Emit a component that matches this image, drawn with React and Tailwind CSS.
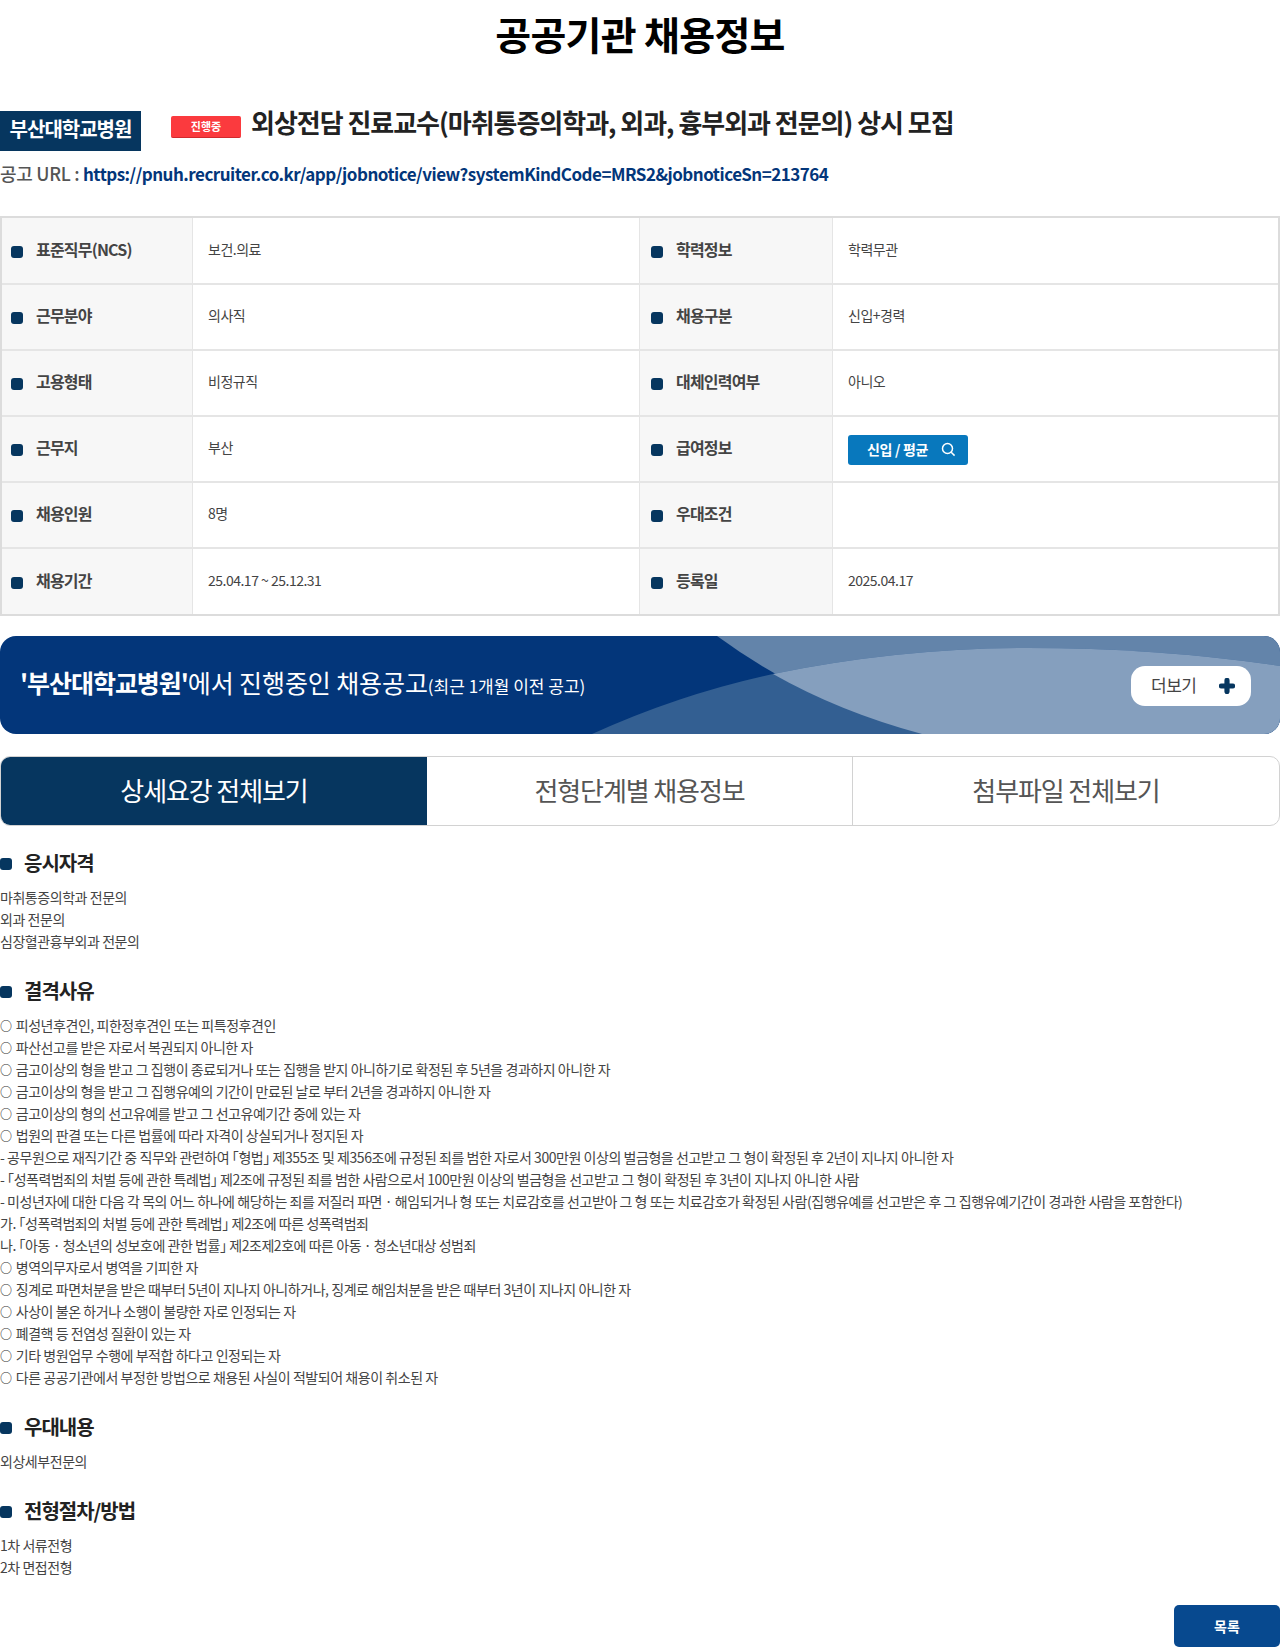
import React from "react";

const font = "font-['Noto_Sans_CJK_KR','Liberation_Sans',sans-serif]";

const rows = [
  ["표준직무(NCS)", "보건.의료", "학력정보", "학력무관", "h-[67px]"],
  ["근무분야", "의사직", "채용구분", "신입+경력", "h-[66px]"],
  ["고용형태", "비정규직", "대체인력여부", "아니오", "h-[66px]"],
  ["근무지", "부산", "급여정보", null, "h-[66px]"],
  ["채용인원", "8명", "우대조건", "", "h-[66px]"],
  ["채용기간", "25.04.17 ~ 25.12.31", "등록일", "2025.04.17", "h-[65px]"],
];

const disq = [
  "○ 피성년후견인, 피한정후견인 또는 피특정후견인",
  "○ 파산선고를 받은 자로서 복권되지 아니한 자",
  "○ 금고이상의 형을 받고 그 집행이 종료되거나 또는 집행을 받지 아니하기로 확정된 후 5년을 경과하지 아니한 자",
  "○ 금고이상의 형을 받고 그 집행유예의 기간이 만료된 날로 부터 2년을 경과하지 아니한 자",
  "○ 금고이상의 형의 선고유예를 받고 그 선고유예기간 중에 있는 자",
  "○ 법원의 판결 또는 다른 법률에 따라 자격이 상실되거나 정지된 자",
  "- 공무원으로 재직기간 중 직무와 관련하여 「형법」 제355조 및 제356조에 규정된 죄를 범한 자로서 300만원 이상의 벌금형을 선고받고 그 형이 확정된 후 2년이 지나지 아니한 자",
  "- 「성폭력범죄의 처벌 등에 관한 특례법」 제2조에 규정된 죄를 범한 사람으로서 100만원 이상의 벌금형을 선고받고 그 형이 확정된 후 3년이 지나지 아니한 사람",
  "- 미성년자에 대한 다음 각 목의 어느 하나에 해당하는 죄를 저질러 파면 · 해임되거나 형 또는 치료감호를 선고받아 그 형 또는 치료감호가 확정된 사람(집행유예를 선고받은 후 그 집행유예기간이 경과한 사람을 포함한다)",
  "가. 「성폭력범죄의 처벌 등에 관한 특례법」 제2조에 따른 성폭력범죄",
  "나. 「아동 · 청소년의 성보호에 관한 법률」 제2조제2호에 따른 아동 · 청소년대상 성범죄",
  "○ 병역의무자로서 병역을 기피한 자",
  "○ 징계로 파면처분을 받은 때부터 5년이 지나지 아니하거나, 징계로 해임처분을 받은 때부터 3년이 지나지 아니한 자",
  "○ 사상이 불온 하거나 소행이 불량한 자로 인정되는 자",
  "○ 폐결핵 등 전염성 질환이 있는 자",
  "○ 기타 병원업무 수행에 부적합 하다고 인정되는 자",
  "○ 다른 공공기관에서 부정한 방법으로 채용된 사실이 적발되어 채용이 취소된 자",
];

function Bullet({ className = "" }) {
  return <span className={`block w-3 h-3 rounded-[3px] bg-[#06365f] shrink-0 ${className}`} />;
}

function Th({ label, first }) {
  return (
    <div className={`bg-[#f7f7f7] border-r border-[#e5e5e5] flex items-center ${first ? "pl-[9px]" : "pl-[11px]"}`}>
      <Bullet className="mt-[2px]" />
      <span className="ml-[13px] text-[16px] font-bold text-[#444] tracking-[-0.8px] -mt-[4px]">{label}</span>
    </div>
  );
}

function Td({ children, last }) {
  return (
    <div className={`flex items-center pl-[15px] pb-[3px] text-[14px] text-[#444] tracking-[-0.5px] ${last ? "" : "border-r border-[#e5e5e5]"}`}>
      {children}
    </div>
  );
}

function Line({ text }) {
  if (text.startsWith("○ ")) {
    return (
      <p className="whitespace-nowrap h-[22px]">
        <span className="text-[12px] leading-none font-bold text-[#333] mr-[1.5px]">○</span>
        {text.slice(1)}
      </p>
    );
  }
  return <p className="whitespace-nowrap h-[22px]">{text}</p>;
}

function Section({ title, lines, className = "" }) {
  return (
    <section className={className}>
      <h3 className="flex items-center h-[30px]">
        <Bullet className="mt-[1px]" />
        <span className="ml-3 text-[20px] font-bold text-[#222] tracking-[-1px]">{title}</span>
      </h3>
      <div className="mt-[8px] text-[14px] leading-[22px] text-[#444] tracking-[-0.45px] [font-feature-settings:'halt']">
        {lines.map((l, i) => (
          <Line key={i} text={l} />
        ))}
      </div>
    </section>
  );
}

export default function App() {
  return (
    <div className={`${font} w-[1280px] h-[1647px] bg-white overflow-hidden`}>
      <h1 className="text-center text-[39px] leading-[66px] font-bold text-black tracking-[-0.7px]">공공기관 채용정보</h1>

      <div className="mt-[45px] flex items-start">
        <span className="w-[141px] h-[40px] pb-[5px] bg-[#06365f] text-white text-[20px] font-bold flex items-center justify-center tracking-[-1px]">부산대학교병원</span>
        <span className="ml-[30px] mt-[5px] w-[70px] h-[22px] rounded-[2px] bg-[#fb3a3e] border-b border-[#d02a2e] text-white text-[11px] font-bold flex items-center justify-center">진행중</span>
        <span className="ml-[10px] -mt-[7px] text-[26px] leading-[36px] font-bold text-[#222] tracking-[-1.03px] whitespace-nowrap">외상전담 진료교수(마취통증의학과, 외과, 흉부외과 전문의) 상시 모집</span>
      </div>

      <div className="mt-[9px] h-[27px] text-[17px] leading-[26px] font-medium text-[#555] whitespace-nowrap tracking-[-0.5px]">
        <span className="text-[18px] tracking-[-0.3px]">공고 URL : </span><a className="font-bold text-[#03367a]">https://pnuh.recruiter.co.kr/app/jobnotice/view?systemKindCode=MRS2&amp;jobnoticeSn=213764</a>
      </div>

      <div className="mt-[29px] border-2 border-[#dcdcdc] w-[1280px]">
        {rows.map((r, i) => (
          <div key={i} className={`${r[4]} grid grid-cols-[191px_447px_193px_1fr] ${i < rows.length - 1 ? "border-b-2 border-[#e5e5e5]" : ""}`}>
            <Th label={r[0]} first />
            <Td>{r[1]}</Td>
            <Th label={r[2]} />
            <Td last>
              {r[3] === null ? (
                <button className="w-[120px] h-[30px] rounded-[3px] bg-[#0878bd] text-white text-[14px] font-bold flex items-center tracking-[-0.3px] pl-[19px] mt-[4px]">
                  신입 / 평균
                  <svg className="ml-[13px]" width="15" height="15" viewBox="0 0 15 15" fill="none" stroke="white" strokeWidth="1.5">
                    <circle cx="6.5" cy="6.5" r="5" />
                    <path d="M10.2 10.2L13.6 13.6" />
                  </svg>
                </button>
              ) : (
                r[3]
              )}
            </Td>
          </div>
        ))}
      </div>

      <div className="relative mt-[20px] h-[98px] rounded-[16px] bg-[#03367a] overflow-hidden flex items-center justify-between">
        <svg className="absolute inset-0" width="1280" height="98" viewBox="0 0 1280 98" preserveAspectRatio="none">
          <path d="M717 0 Q 810 68 922 98 L 1280 98 L 1280 0 Z" fill="#6384aa" />
          <path d="M592 98 Q 680 58 773 38 Q 900 12 1028 12 Q 1160 12 1280 30 L 1280 98 Z" fill="#335f92" />
          <path d="M773 38 Q 840 76 922 98 L 1280 98 L 1280 30 Q 1160 12 1028 12 Q 900 12 773 38 Z" fill="#859fbe" />
        </svg>
        <p className="relative ml-[20px] text-white text-[25px] tracking-[-0.1px] whitespace-nowrap -mt-[4px]">
          <b className="font-bold tracking-[-1.05px]">'부산대학교병원'</b>에서 진행중인 채용공고<span className="text-[17px] tracking-[0px]">(최근 1개월 이전 공고)</span>
        </p>
        <a className="relative mr-[29px] mt-[2px] w-[120px] h-[40px] rounded-[14px] bg-white flex items-center pl-[20px] pb-[2px] text-[17px] text-[#444] tracking-[-0.5px]">
          더보기
          <svg className="ml-[23px] mt-[2px]" width="16" height="16" viewBox="0 0 16 16" fill="#06365f">
            <path d="M5.4 2.4a2.6 2.6 0 0 1 5.2 0V5.4h3a2.6 2.6 0 0 1 0 5.2h-3v3a2.6 2.6 0 0 1-5.2 0v-3h-3a2.6 2.6 0 0 1 0-5.2h3Z" />
          </svg>
        </a>
      </div>

      <div className="mt-[22px] h-[70px] flex rounded-[10px] border border-[#d2d2d2] overflow-hidden text-[26px] tracking-[-1.1px]">
        <div className="w-[426px] pb-[3px] bg-[#06365f] text-white flex items-center justify-center">상세요강 전체보기</div>
        <div className="w-[426px] pb-[3px] border-r border-[#d2d2d2] text-[#555] flex items-center justify-center">전형단계별 채용정보</div>
        <div className="flex-1 pb-[3px] text-[#555] flex items-center justify-center">첨부파일 전체보기</div>
      </div>

      <Section className="mt-[22px]" title="응시자격" lines={["마취통증의학과 전문의", "외과 전문의", "심장혈관흉부외과 전문의"]} />
      <Section className="mt-[24px]" title="결격사유" lines={disq} />
      <Section className="mt-[24px]" title="우대내용" lines={["외상세부전문의"]} />
      <Section className="mt-[24px]" title="전형절차/방법" lines={["1차 서류전형", "2차 면접전형"]} />

      <div className="mt-[27px] flex justify-end">
        <button className="w-[106px] h-[42px] rounded-[5px] bg-[#07498f] text-white text-[14px] font-bold flex items-center justify-center">목록</button>
      </div>
    </div>
  );
}
